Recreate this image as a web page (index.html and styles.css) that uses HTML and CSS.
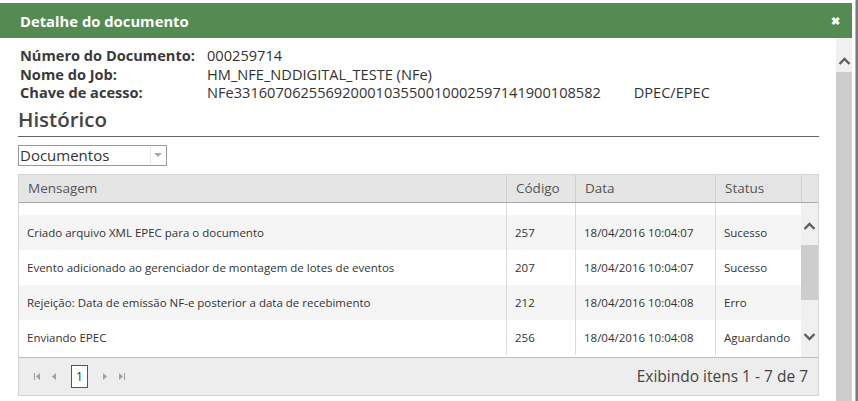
FILE: index.html
```html
<!DOCTYPE html>
<html lang="pt-BR">
<head>
    <meta charset="UTF-8">
    <title>Detalhe do documento</title>
    <link rel="stylesheet" href="styles.css">
</head>
<body>
    <div class="window">
        <div class="titlebar">
            <span class="title">Detalhe do documento</span>
            <span class="close">&#x2716;</span>
        </div>

        <div class="content">
            <div class="main">
                <div class="info">
                    <span class="label">Número do Documento:</span>
                    <span class="value">000259714</span>
                    <span class="label">Nome do Job:</span>
                    <span class="value">HM_NFE_NDDIGITAL_TESTE (NFe)</span>
                    <span class="label">Chave de acesso:</span>
                    <span class="value">NFe33160706255692000103550010002597141900108582 <span class="tipo">DPEC/EPEC</span></span>
                </div>

                <h2 class="section-title">Histórico</h2>

                <div class="dropdown">
                    <span>Documentos</span>
                    <span class="dropdown-arrow"></span>
                </div>

                <div class="grid">
                    <div class="grid-head">
                        <div class="cell">Mensagem</div>
                        <div class="cell">Código</div>
                        <div class="cell">Data</div>
                        <div class="cell">Status</div>
                        <div class="cell"></div>
                    </div>

                    <div class="grid-content">
                        <div class="rows">
                            <div class="row row-partial">
                                <div class="cell"></div>
                                <div class="cell"></div>
                                <div class="cell"></div>
                                <div class="cell"></div>
                            </div>
                            <div class="row alt">
                                <div class="cell">Criado arquivo XML EPEC para o documento</div>
                                <div class="cell">257</div>
                                <div class="cell">18/04/2016 10:04:07</div>
                                <div class="cell">Sucesso</div>
                            </div>
                            <div class="row">
                                <div class="cell">Evento adicionado ao gerenciador de montagem de lotes de eventos</div>
                                <div class="cell">207</div>
                                <div class="cell">18/04/2016 10:04:07</div>
                                <div class="cell">Sucesso</div>
                            </div>
                            <div class="row alt">
                                <div class="cell">Rejeição: Data de emissão NF-e posterior a data de recebimento</div>
                                <div class="cell">212</div>
                                <div class="cell">18/04/2016 10:04:08</div>
                                <div class="cell">Erro</div>
                            </div>
                            <div class="row">
                                <div class="cell">Enviando EPEC</div>
                                <div class="cell">256</div>
                                <div class="cell">18/04/2016 10:04:08</div>
                                <div class="cell">Aguardando</div>
                            </div>
                        </div>

                        <div class="vscroll grid-scroll">
                            <svg class="arrow" width="13" height="9" viewBox="0 0 13 9"><polyline points="1.5,7 6.5,2 11.5,7" fill="none" stroke="#5f5f5f" stroke-width="2.4"/></svg>
                            <div class="track"><div class="thumb"></div></div>
                            <svg class="arrow" width="13" height="9" viewBox="0 0 13 9"><polyline points="1.5,2 6.5,7 11.5,2" fill="none" stroke="#5f5f5f" stroke-width="2.4"/></svg>
                        </div>
                    </div>

                    <div class="pager">
                        <div class="pager-nav">
                            <svg width="8" height="9" viewBox="0 0 8 9"><rect x="1" y="1" width="1" height="7" fill="#a0a0a0"/><polygon points="7,1 3,4.5 7,8" fill="#a0a0a0"/></svg>
                            <svg width="8" height="9" viewBox="0 0 8 9"><polygon points="6,1 2,4.5 6,8" fill="#a0a0a0"/></svg>
                            <span class="page">1</span>
                            <svg width="8" height="9" viewBox="0 0 8 9"><polygon points="2,1 6,4.5 2,8" fill="#a0a0a0"/></svg>
                            <svg width="8" height="9" viewBox="0 0 8 9"><polygon points="1,1 5,4.5 1,8" fill="#a0a0a0"/><rect x="6" y="1" width="1" height="7" fill="#a0a0a0"/></svg>
                        </div>
                        <span class="pager-info">Exibindo itens 1 - 7 de 7</span>
                    </div>
                </div>
            </div>

            <div class="vscroll page-scroll">
                <svg class="arrow" width="13" height="9" viewBox="0 0 13 9"><polyline points="1.5,7 6.5,2 11.5,7" fill="none" stroke="#5f5f5f" stroke-width="2.4"/></svg>
                <div class="track"><div class="thumb"></div></div>
            </div>
        </div>
    </div>
    <div class="edge"></div>
</body>
</html>
```

FILE: styles.css
```css
* {
    margin: 0;
    padding: 0;
    box-sizing: border-box;
}

body {
    font-family: 'Open Sans', 'Noto Sans', sans-serif;
    color: #333;
    background-color: #fff;
    display: flex;
    height: 401px;
    overflow: hidden;
}

.window {
    width: 852px;
    height: 401px;
    padding-top: 3px;
    display: flex;
    flex-direction: column;
    background-color: #fff;
}

.edge {
    width: 6px;
    height: 401px;
    margin-left: 3px;
    border-left: 1px solid #b5b5b5;
    background-color: #7a7a7a;
}

.titlebar {
    height: 35px;
    background-color: #548b52;
    display: flex;
    align-items: center;
    justify-content: space-between;
    padding: 0 12px 0 20px;
    color: #fff;
}

.title {
    font-size: 14.8px;
    font-weight: bold;
}

.close {
    font-size: 11px;
    font-weight: bold;
}

.content {
    flex: 1;
    display: flex;
    min-height: 0;
}

.main {
    flex: 1;
    padding: 8px 17px 0 18px;
}

.info {
    display: grid;
    grid-template-columns: 187px 1fr;
    padding-left: 2px;
    font-size: 14.6px;
    line-height: 18.5px;
}

.label {
    font-weight: bold;
    color: #3a3a3a;
}

.value {
    color: #333;
}

.tipo {
    margin-left: 29px;
}

.section-title {
    font-size: 20.5px;
    font-weight: 600;
    color: #444;
    line-height: 26px;
    margin-top: 4px;
    padding-bottom: 4px;
    border-bottom: 1px solid #666;
}

.dropdown {
    width: 149px;
    height: 21px;
    margin-top: 8px;
    border: 1px solid #999;
    display: flex;
    align-items: center;
    justify-content: space-between;
    font-size: 15px;
    line-height: 19px;
    color: #333;
    padding-left: 1px;
}

.dropdown-arrow {
    width: 14px;
    height: 17px;
    margin-right: 2px;
    border-left: 1px solid #e6e6e6;
    display: flex;
    align-items: center;
    justify-content: center;
}

.dropdown-arrow::after {
    content: '';
    border-left: 4px solid transparent;
    border-right: 4px solid transparent;
    border-top: 4px solid #aaa;
}

.grid {
    margin-top: 8px;
    border: 1px solid #d5d5d5;
}

.grid-head,
.row {
    display: grid;
    grid-template-columns: 487px 69px 140px 86px 17px;
}

.row {
    grid-template-columns: 487px 69px 140px 86px;
}

.grid-head {
    height: 28px;
    background-color: #e5e5e5;
    border-bottom: 1px solid #a8a8a8;
    font-size: 13.5px;
    color: #555;
}

.grid-head .cell {
    display: flex;
    align-items: center;
    padding-left: 9px;
    border-left: 1px solid #d0d0d0;
}

.grid-head .cell:first-child {
    border-left: none;
}

.grid-content {
    display: flex;
    height: 155px;
    overflow: hidden;
    border-bottom: 1px solid #bdbdbd;
}

.rows {
    flex: 1;
}

.row {
    height: 35px;
    font-size: 11.5px;
    color: #333;
}

.row.alt {
    background-color: #f5f5f5;
}

.row-partial {
    height: 12px;
}

.row .cell {
    display: flex;
    align-items: center;
    padding-left: 8px;
    border-left: 1px solid #dadada;
    white-space: nowrap;
}

.row .cell:first-child {
    border-left: none;
}

.vscroll {
    width: 17px;
    display: flex;
    flex-direction: column;
    align-items: center;
    background-color: #f0f0f0;
}

.grid-scroll {
    padding: 17px 0 14px;
}

.vscroll .arrow {
    flex: none;
    margin: 2px 0;
}

.track {
    flex: 1;
    width: 100%;
}

.grid-scroll .track {
    padding-top: 12px;
}

.grid-scroll .thumb {
    height: 55px;
    background-color: #cdcdcd;
}

.page-scroll {
    padding-top: 17px;
}

.page-scroll .track {
    display: flex;
    padding-top: 4px;
}

.page-scroll .thumb {
    flex: 1;
    background-color: #cdcdcd;
}

.pager {
    height: 37px;
    background-color: #ededed;
    display: flex;
    align-items: center;
    justify-content: space-between;
    padding: 0 10px 0 14px;
}

.pager-nav {
    display: flex;
    align-items: center;
    gap: 9px;
}

.page {
    width: 17px;
    height: 23px;
    border: 1px solid #555;
    background-color: #fff;
    font-size: 12px;
    display: flex;
    align-items: center;
    justify-content: center;
    margin: 0 4px;
}

.pager-info {
    font-size: 15.5px;
    color: #444;
}
```
